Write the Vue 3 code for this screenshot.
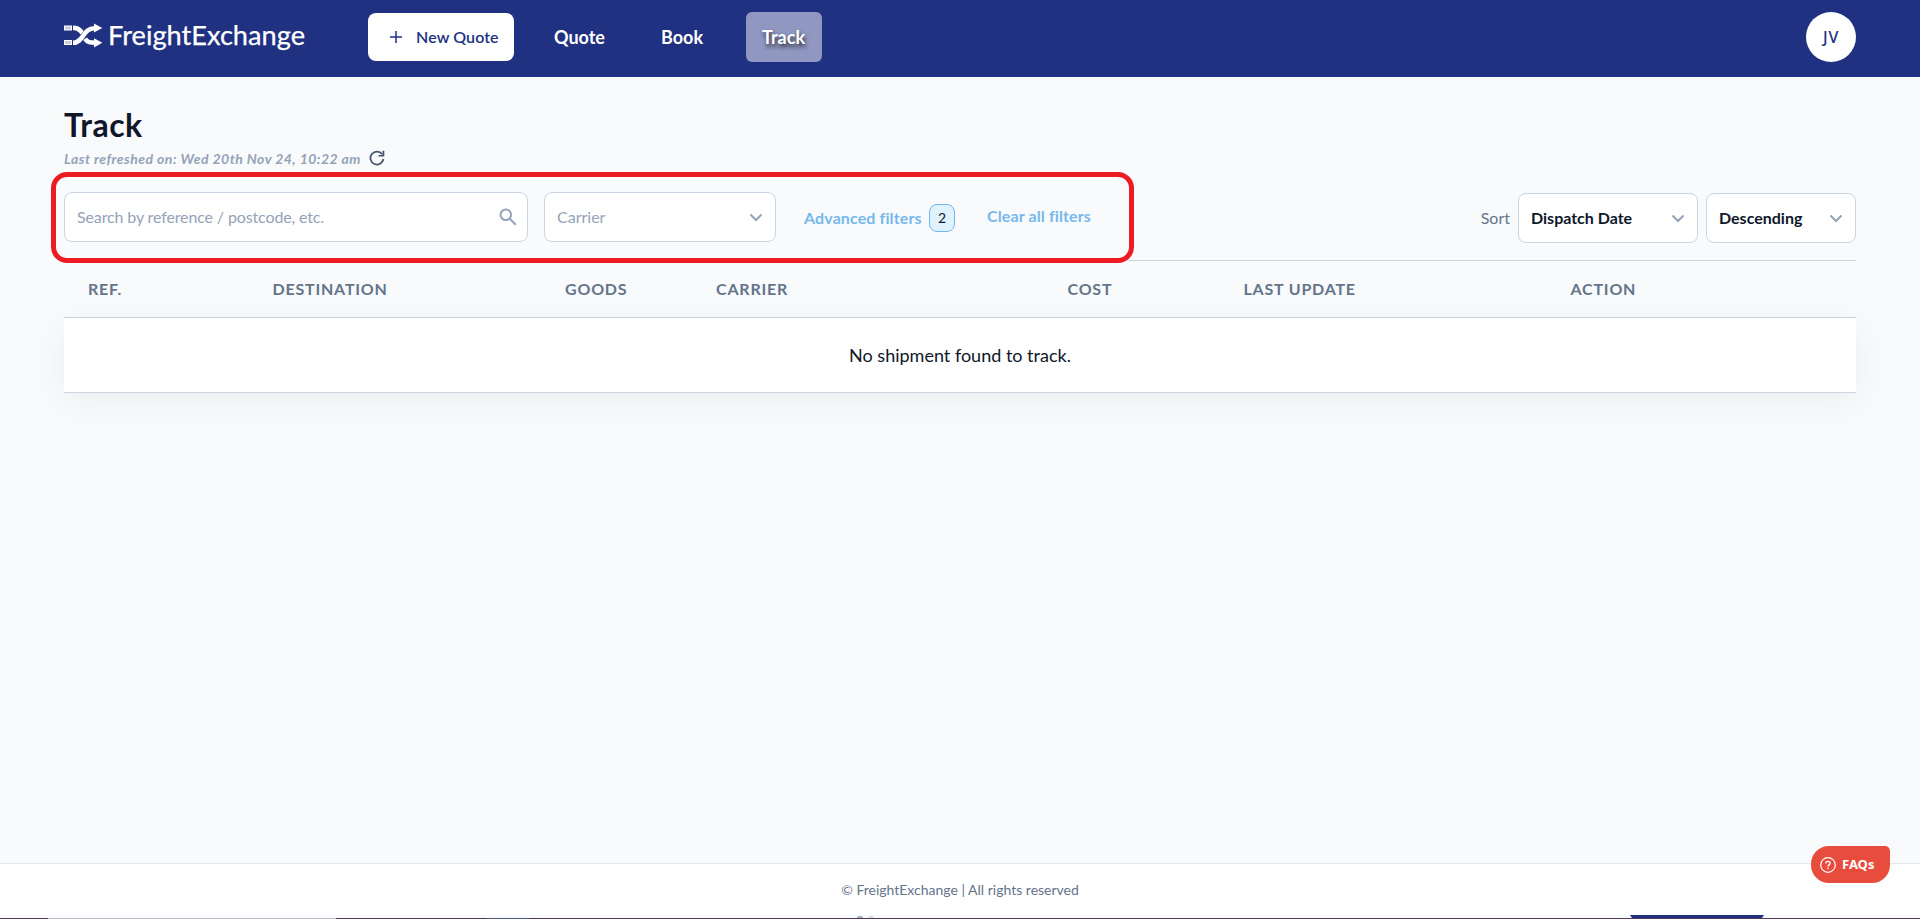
<script setup>
const columns = [
  { label: 'REF.', width: 184.5 },
  { label: 'DESTINATION', width: 292.5 },
  { label: 'GOODS', width: 151 },
  { label: 'CARRIER', width: 351.5 },
  { label: 'COST', width: 176 },
  { label: 'LAST UPDATE', width: 327 },
  { label: 'ACTION', width: 200 },
]
</script>

<template>
  <div class="page">
    <header class="topbar">
      <div class="logo">
        <svg class="logo-mark" width="39" height="26" viewBox="0 0 39 26">
          <g fill="#c9cde2" stroke="#fff" stroke-width="1">
            <rect x=".5" y="3" width="7" height="4" />
            <rect x=".5" y="17.5" width="7" height="4" />
          </g>
          <g fill="none" stroke="#fff" stroke-width="4.6">
            <path d="M9 4.8C16 4.8 16 8 18.2 9.8" />
            <path d="M9 19.8C19.500 19.800 19 5.200 30.500 5.200H32" />
            <path d="M21 15.800C23.500 19.500 26 19.700 32 19.700" />
          </g>
          <path d="M30 .5 38.300 5 30 9.500ZM30 15.200 38.300 19.800 30 24.500Z" fill="#fff" />
        </svg>
        <svg class="logo-name" width="200" height="40" viewBox="0 0 200 40">
          <text x="-1" y="28" textLength="197" lengthAdjust="spacingAndGlyphs">FreightExchange</text>
        </svg>
      </div>
      <button class="new-quote">
        <svg width="12" height="12" viewBox="0 0 12 12"><path d="M6 0V12M0 6H12" stroke="#203182" stroke-width="1.500" /></svg>
        <span>New Quote</span>
      </button>
      <nav class="nav">
        <a>Quote</a>
        <a>Book</a>
        <a class="active">Track</a>
      </nav>
      <div class="avatar">JV</div>
    </header>

    <main class="content">
      <h1>Track</h1>
      <div class="refreshed">
        <span>Last refreshed on: Wed 20th Nov 24, 10:22 am</span>
        <svg width="16" height="16" viewBox="0 0 16 16">
          <path d="M13.200 4.200A6.500 6.500 0 1 0 14.400 9" fill="none" stroke="#475569" stroke-width="1.800" />
          <path d="M15.300 .8V6.500H9.500V5H13.500V.8Z" fill="#475569" />
        </svg>
      </div>

      <div class="toolbar">
        <div class="field search">
          <span>Search by reference / postcode, etc.</span>
          <svg width="18" height="18" viewBox="0 0 18 18" fill="none" stroke="#94a3b8" stroke-width="2">
            <circle cx="6.800" cy="6.800" r="5.300" /><path d="M10.800 10.800 16.800 16.800" />
          </svg>
        </div>
        <div class="field carrier">
          <span>Carrier</span>
          <svg class="chev" width="14" height="9" viewBox="0 0 14 9"><path d="M1.500 1.500 7 7 12.500 1.500" /></svg>
        </div>
        <a class="link advanced">Advanced filters</a>
        <span class="count">2</span>
        <a class="link clear">Clear all filters</a>
        <div class="sort">
          <span class="sort-label">Sort</span>
          <div class="field strong by">
            <span>Dispatch Date</span>
            <svg class="chev" width="14" height="9" viewBox="0 0 14 9"><path d="M1.500 1.500 7 7 12.500 1.500" /></svg>
          </div>
          <div class="field strong dir">
            <span>Descending</span>
            <svg class="chev" width="14" height="9" viewBox="0 0 14 9"><path d="M1.500 1.500 7 7 12.500 1.500" /></svg>
          </div>
        </div>
        <div class="highlight"></div>
      </div>

      <section class="table">
        <div class="thead">
          <div v-for="c in columns" :key="c.label" :style="{ width: c.width + 'px' }">{{ c.label }}</div>
        </div>
        <div class="empty">No shipment found to track.</div>
      </section>
    </main>

    <footer class="footer">
      <div class="copyright">© FreightExchange | All rights reserved</div>
      <div class="strip">
        <i class="seg gray"></i>
        <i class="seg blue"></i>
        <i class="dots"></i>
        <i class="tab"></i>
      </div>
    </footer>

    <div class="faqs">
      <svg width="16" height="16" viewBox="0 0 16 16" fill="none" stroke="#fff">
        <circle cx="8" cy="8" r="7.300" stroke-width="1.200" />
        <path d="M5.900 6.400C5.900 3.700 10.100 3.800 10.100 6.300C10.100 7.900 8 7.800 8 9.500M8 10.600V12" stroke-width="1.400" />
      </svg>
      <span>FAQs</span>
    </div>
  </div>
</template>

<style>
body { margin: 0; overflow: hidden; }
</style>

<style scoped>
.page {
  position: relative;
  display: flex;
  flex-direction: column;
  width: 1920px;
  height: 919px;
  overflow: hidden;
  background: #f8fafc;
  font-family: Lato, "Liberation Sans", sans-serif;
  color: #0f172a;
}
.page * { box-sizing: border-box; }
.topbar {
  display: flex;
  align-items: center;
  height: 77px;
  flex: none;
  padding: 0 64px 3px;
  background: #203182;
}
.logo { display: flex; align-items: center; width: 304px; }
.logo-mark { flex: none; margin-right: 6px; margin-top: -2px; }
.logo-name { flex: none; overflow: visible; }
.logo-name text { font-size: 26.5px; fill: #fff; stroke: #fff; stroke-width: .25px; }
.new-quote {
  display: flex;
  align-items: center;
  gap: 14px;
  width: 146px;
  height: 48px;
  padding: 0 0 0 22px;
  border: 0;
  border-radius: 8px;
  background: #fff;
  color: #203182;
  font: 600 16px Lato, sans-serif;
  letter-spacing: .1px;
  white-space: nowrap;
}
.new-quote span { padding-bottom: 2px; }
.nav { display: flex; gap: 24px; margin-left: 24px; }
.nav a {
  height: 50px;
  padding: 0 16px;
  border-radius: 6px;
  line-height: 50px;
  font-size: 18px;
  font-weight: 700;
  color: #fff;
}
.nav .active {
  width: 76px;
  margin-left: 3px;
  background: #9097c1;
  text-shadow: 1px 3px 4px rgba(0, 0, 0, .75);
}
.avatar {
  width: 50px;
  height: 50px;
  margin-left: auto;
  border-radius: 50%;
  background: #fff;
  color: #203182;
  font: 500 16px/50px "Noto Sans", sans-serif;
  letter-spacing: .8px;
  text-align: center;
}
.content { flex: 1; padding: 0 64px; }
h1 { margin: 28px 0 1px; font-size: 32px; line-height: 40px; font-weight: 700; letter-spacing: .4px; }
.refreshed {
  display: flex;
  align-items: center;
  gap: 8px;
  height: 24px;
  font-size: 14px;
  font-weight: 700;
  font-style: italic;
  letter-spacing: .46px;
  color: #94a3b8;
}
.refreshed span { width: 297px; white-space: nowrap; }
.toolbar {
  position: relative;
  display: flex;
  height: 68px;
  margin-top: 22px;
  font-size: 16px;
}
.highlight {
  position: absolute;
  left: -13px;
  top: -20px;
  width: 1083px;
  height: 91px;
  border: 5px solid #ed1c24;
  border-radius: 16px;
}
.field {
  display: flex;
  align-items: center;
  justify-content: space-between;
  height: 50px;
  padding: 0 12px;
  border: 1px solid #cbd5e1;
  border-radius: 8px;
  background: #fff;
  color: #94a3b8;
}
.field span { padding-bottom: 2px; }
.chev { fill: none; stroke: #94a3b8; stroke-width: 2; }
.search { width: 464px; padding-right: 10px; }
.search span { letter-spacing: -.13px; }
.carrier { width: 232px; margin-left: 16px; }
.link { color: #77b8ec; font-weight: 700; line-height: 50px; white-space: nowrap; letter-spacing: .12px; }
.advanced { margin: 1px 0 0 28px; width: 117px; }
.count {
  width: 26px;
  height: 28px;
  margin: 12px 0 0 8px;
  border: 1px solid #70b8ee;
  border-radius: 8px;
  background: #e0f2fe;
  font-size: 14px;
  line-height: 26px;
  text-align: center;
}
.clear { margin: -1px 0 0 32px; }
.sort { display: flex; margin: 1px 0 0 auto; }
.sort-label { line-height: 50px; margin-right: 8px; color: #64748b; }
.strong { color: #0f172a; font-weight: 700; }
.by { width: 180px; }
.dir { width: 150px; margin-left: 8px; }
.thead {
  display: flex;
  height: 58px;
  padding-left: 24px;
  border-top: 1px solid #cbd5e1;
  border-bottom: 1px solid #cbd5e1;
  color: #64748b;
  font-size: 16px;
  font-weight: 700;
  letter-spacing: .8px;
  line-height: 55px;
}
.thead div { flex: none; }
.empty {
  height: 75px;
  border-bottom: 1px solid #cbd5e1;
  background: #fff;
  box-shadow: 0 8px 36px rgba(0, 0, 0, .055);
  font-size: 18px;
  line-height: 74px;
  text-align: center;
}
.footer { flex: none; height: 56px; border-top: 1px solid #e2e8f0; background: #fff; }
.copyright { height: 51px; line-height: 52px; font-size: 14px; text-align: center; color: #64748b; }
.strip { position: relative; height: 4px; background: #f8fafc; border-bottom: 1px solid #52395b; }
.strip i { position: absolute; display: block; }
.seg { top: 3px; height: 1px; }
.gray { left: 48px; width: 288px; background: #b9bdc4; }
.blue { left: 486px; width: 44px; background: #50577d; }
.dots { left: 857px; top: 1px; width: 6px; height: 2px; background: #a5afbf; border-radius: 2px 2px 0 0; box-shadow: 11px 0 0 -0.5px #b9c1cd; }
.tab { left: 1630px; top: 0; width: 134px; height: 3px; background: #203182; clip-path: polygon(0 0, 100% 0, calc(100% - 2px) 100%, 2px 100%); }
.faqs {
  position: absolute;
  left: 1811px;
  top: 846px;
  display: flex;
  align-items: center;
  gap: 6px;
  width: 79px;
  height: 37px;
  padding-left: 9px;
  border-radius: 18px 5px 18px 18px;
  background: #e74c3c;
  color: #fff;
  font: 700 13px "Noto Sans", sans-serif;
}
.faqs span { margin-top: -1px; }
</style>
